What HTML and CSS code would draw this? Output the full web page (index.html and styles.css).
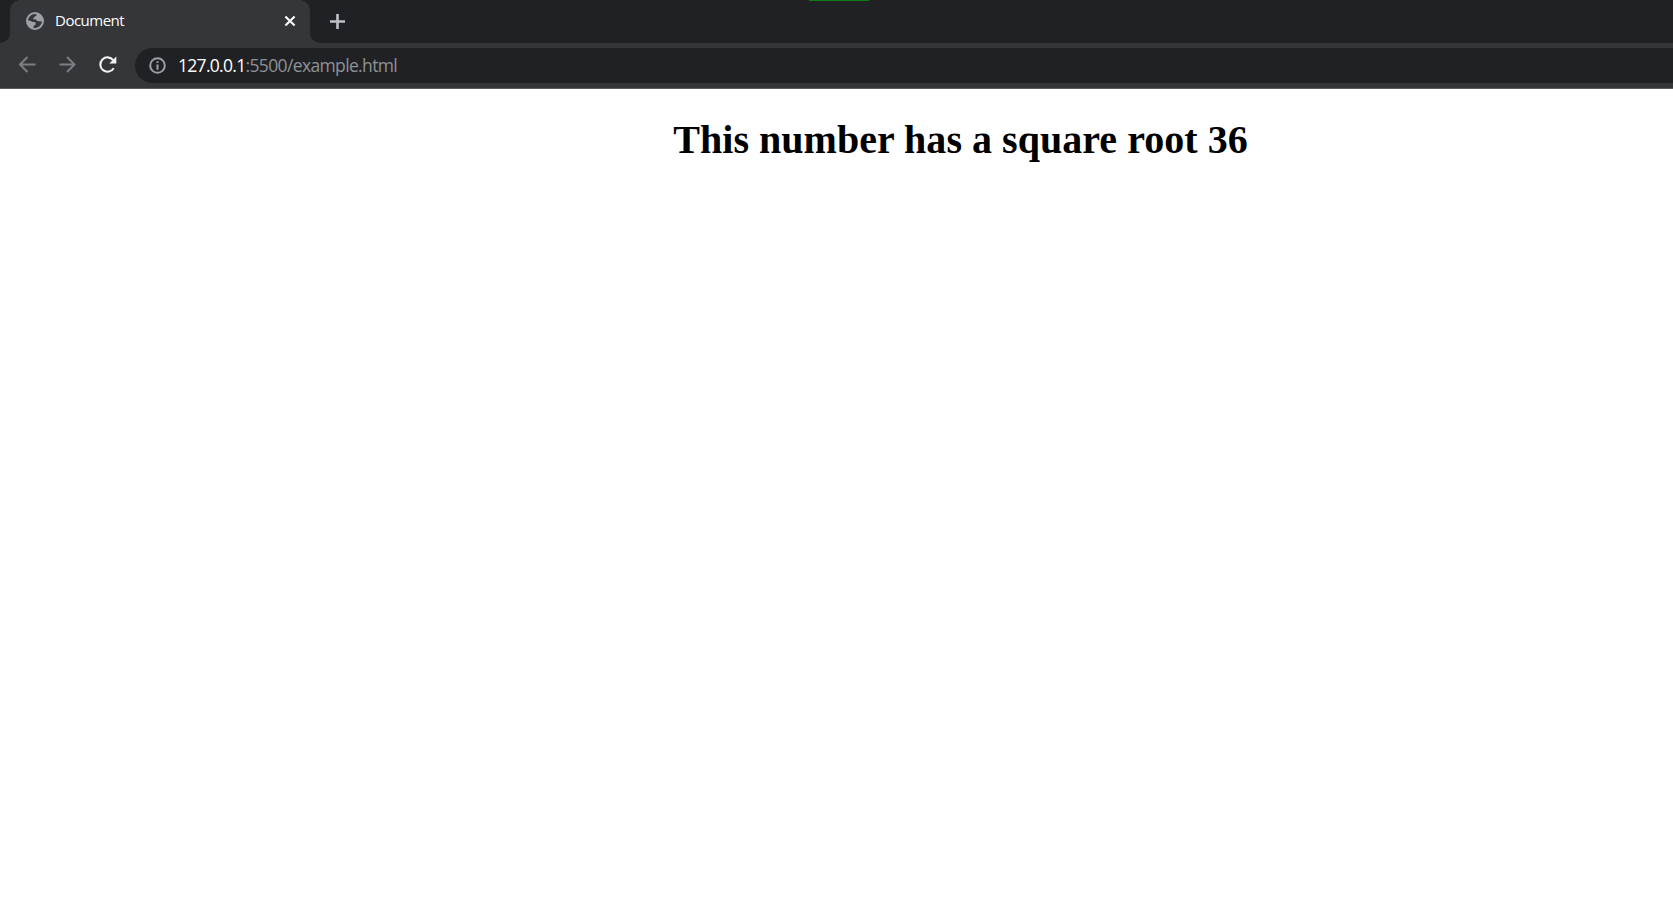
FILE: index.html
```html
<!DOCTYPE html>
<html lang="en">
<head>
<meta charset="utf-8">
<title>Document</title>
<link rel="stylesheet" href="styles.css">
</head>
<body>
<header class="browser">
  <div class="tabs">
    <div class="capture-mark"></div>
    <div class="tab-edge"></div>
    <div class="tab">
      <svg class="globe" width="18" height="18" viewBox="0 0 18 18"><circle cx="9" cy="9" r="9" fill="#9aa0a6"/><path d="M9.4 2C11 2.2 10.8 3.7 9.6 4.1C8.2 4.6 8.5 5.6 7.5 6C6.6 6.4 7 7.4 8.4 7.3C10.8 7.2 10.4 9.3 12 9.2C13.8 9 14.5 9.6 16 9.6A7 7 0 0 1 7.5 15.8V14.2C7.5 13.3 9.9 13.4 9.8 11.7C9.7 10.2 8.6 10.1 7.2 10.1C5.7 10.1 5.2 8.5 2 8.5A7.1 7.1 0 0 1 9.4 2Z" fill="#35363a"/></svg>
      <span class="tab-title">Document</span>
      <svg class="close" width="12" height="12" viewBox="0 0 12 12"><path d="M1.4 1.4L10.6 10.6M10.6 1.4L1.4 10.6" stroke="#fff" stroke-width="2.1"/></svg>
    </div>
    <div class="strip-rest">
      <svg width="15" height="15" viewBox="0 0 15 15"><path d="M7.5 0V15M0 7.5H15" stroke="#bdc1c6" stroke-width="2.6"/></svg>
    </div>
  </div>
  <div class="toolbar">
    <svg class="nav" width="18" height="18" viewBox="0 0 18 18"><path d="M16.5 8.5H1.5M8.5 1L1 8.5L8.5 16" fill="none" stroke="#7c7e82" stroke-width="2"/></svg>
    <svg class="nav" width="18" height="18" viewBox="0 0 18 18"><path d="M.5 8.5H15.5M8 1L15.5 8.5L8 16" fill="none" stroke="#7c7e82" stroke-width="2"/></svg>
    <svg class="nav" width="18" height="18" viewBox="0 0 18 18"><path d="M14.2 4.1A7.2 7.2 0 1 0 14.7 12.2" fill="none" stroke="#f1f3f4" stroke-width="2.1"/><path d="M17.3 .5V7.5H10.3Z" fill="#f1f3f4"/></svg>
    <div class="address">
      <svg width="17" height="17" viewBox="0 0 17 17"><circle cx="8.5" cy="8.5" r="7.3" fill="none" stroke="#9aa0a6" stroke-width="2"/><path d="M8.5 7.5V12.7M8.5 4.2V6" stroke="#9aa0a6" stroke-width="2"/></svg>
      <div class="url"><span class="host">127.0.0.1</span><span class="path">:5500/example.html</span></div>
    </div>
  </div>
</header>
<main class="page"><h1>This number has a square root 36</h1></main>
</body>
</html>
```
FILE: styles.css
```css
body { margin: 0; background: #fff; overflow: hidden; }
svg { display: block; flex: none; }
.browser { font-family: "Open Sans", "Noto Sans", sans-serif; background: #35363a; }
.tabs { position: relative; display: flex; height: 43px; }
.capture-mark { position: absolute; left: 809px; top: 0; width: 60px; height: 1px; background: #107c10; }
.tab-edge { width: 10px; background: #202124; border-bottom-right-radius: 10px; }
.tab { display: flex; align-items: center; box-sizing: border-box; width: 300px; height: 42px; padding: 0 14px 0 16px; position: relative; background: #35363a; }
.tab::before, .tab::after { content: ""; position: absolute; top: 0; width: 10px; height: 10px; }
.tab::before { left: 0; background: radial-gradient(circle at 100% 100%, #35363a 9.5px, #202124 10px); }
.tab::after { right: 0; background: radial-gradient(circle at 0 100%, #35363a 9.5px, #202124 10px); }
.tab-title { margin: 0 0 2px 11px; font-size: 15px; line-height: 20px; letter-spacing: -.5px; color: #fff; }
.close { margin-left: auto; }
.strip-rest { flex: 1; box-sizing: border-box; padding: 14px 0 0 20px; background: #202124; border-bottom-left-radius: 10px; }
.toolbar { display: flex; align-items: flex-start; box-sizing: border-box; height: 46px; padding: 5px 0 0 19px; border-bottom: 1px solid #5b5c60; }
.nav { margin: 8px 22px 0 0; }
.address { display: flex; align-items: center; flex: 1; height: 35px; margin-left: -4px; padding-left: 14px; background: #202124; border-radius: 18px 0 0 18px; }
.url { margin: 0 0 2px 12px; font-size: 17.5px; line-height: 24px; white-space: nowrap; }
.host { color: #fff; letter-spacing: -.7px; }
.path { color: #8f9296; letter-spacing: -.64px; }
.page { padding-left: 248px; }
.page h1 { margin: 28px 0 0; text-align: center; font: bold 40px/46px "Liberation Serif", serif; letter-spacing: .03px; color: #000; }
```
